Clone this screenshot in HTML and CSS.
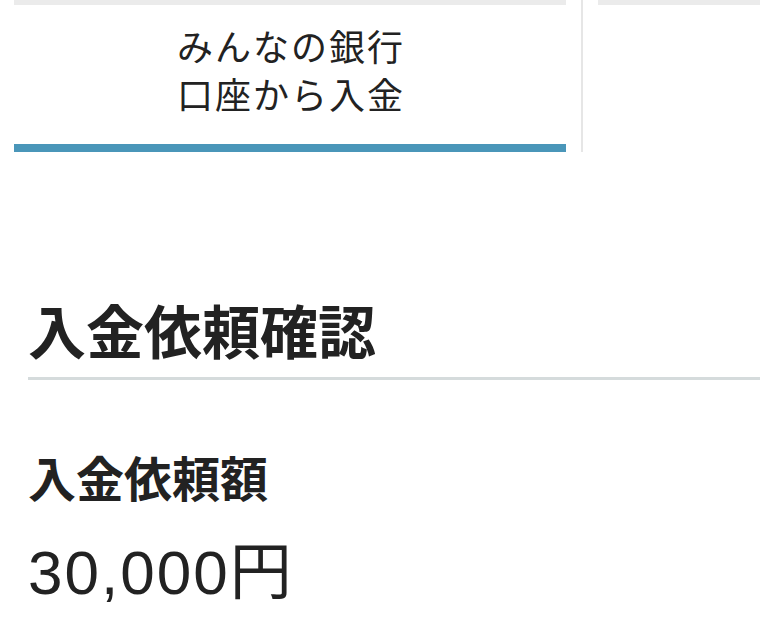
FILE: index.html
```html
<!DOCTYPE html>
<html lang="ja">
<head>
    <meta charset="UTF-8">
    <title>入金依頼確認</title>
    <link rel="stylesheet" href="styles.css">
</head>
<body>
    <div class="tabs">
        <div class="tab active">
            <span class="tab-line">みんなの銀行</span>
            <span class="tab-line">口座から入金</span>
        </div>
        <div class="tab-divider"></div>
        <div class="tab"></div>
    </div>
    <div class="content">
        <h2>入金依頼確認</h2>
        <h3>入金依頼額</h3>
        <p class="amount">30,000円</p>
    </div>
</body>
</html>
```

FILE: styles.css
```css
body {
    font-family: "Noto Sans CJK JP", "Noto Sans", sans-serif;
    background-color: #fff;
    color: #222;
    margin: 0;
    padding: 0;
}
.tabs {
    display: flex;
    padding-left: 14px;
}
.tab {
    flex: 1;
    border-top: 5px solid #ebebeb;
}
.tab.active {
    flex: none;
    width: 552px;
    padding: 16px 0 27px;
    border-bottom: 8px solid #4a96b9;
    text-align: center;
    font-size: 36px;
    line-height: 48px;
    letter-spacing: 2px;
}
.tab-line {
    display: block;
    height: 48px;
    padding-left: 2px;
}
.tab-divider {
    width: 2px;
    margin: 0 15px;
    background-color: #e6e6e6;
}
.content {
    padding-left: 28px;
}
h2 {
    margin: 145px 0 0;
    padding-bottom: 16px;
    font-size: 58px;
    line-height: 64px;
    font-weight: bold;
    border-bottom: 3px solid #d5dbdc;
}
h3 {
    margin: 68px 0 0;
    font-size: 48px;
    line-height: 56px;
    font-weight: bold;
}
.amount {
    margin: 33px 0 0;
    font-family: "Liberation Sans", "Noto Sans CJK JP", sans-serif;
    font-size: 62px;
    line-height: 72px;
    letter-spacing: 2px;
}
```
